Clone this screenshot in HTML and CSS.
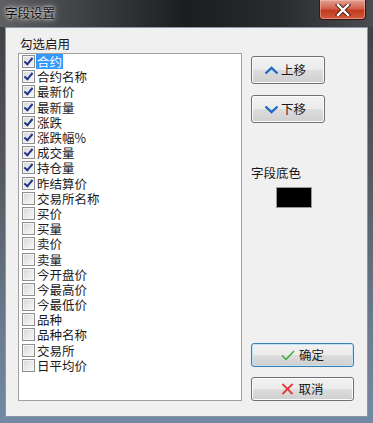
FILE: index.html
```html
<!DOCTYPE html>
<html lang="zh-CN">
<head>
  <meta charset="UTF-8">
  <title>字段设置</title>
  <link rel="stylesheet" href="styles.css">
</head>
<body>
  <div class="window">
    <div class="titlebar">
      <span class="title">字段设置</span>
      <div class="close">
        <svg width="16" height="12" viewBox="0 0 16 12">
          <path d="M3 1 L13 11 M13 1 L3 11" stroke="#4a1a14" stroke-width="4.2" stroke-linecap="square"/>
          <path d="M3 1 L13 11 M13 1 L3 11" stroke="#fff" stroke-width="2.4" stroke-linecap="square"/>
        </svg>
      </div>
    </div>
    <div class="client">
      <div class="left">
        <p class="label">勾选启用</p>
        <ul class="fields">
          <li class="on selected"><span class="box"></span><span class="name">合约</span></li>
          <li class="on"><span class="box"></span><span class="name">合约名称</span></li>
          <li class="on"><span class="box"></span><span class="name">最新价</span></li>
          <li class="on"><span class="box"></span><span class="name">最新量</span></li>
          <li class="on"><span class="box"></span><span class="name">涨跌</span></li>
          <li class="on"><span class="box"></span><span class="name">涨跌幅%</span></li>
          <li class="on"><span class="box"></span><span class="name">成交量</span></li>
          <li class="on"><span class="box"></span><span class="name">持仓量</span></li>
          <li class="on"><span class="box"></span><span class="name">昨结算价</span></li>
          <li><span class="box"></span><span class="name">交易所名称</span></li>
          <li><span class="box"></span><span class="name">买价</span></li>
          <li><span class="box"></span><span class="name">买量</span></li>
          <li><span class="box"></span><span class="name">卖价</span></li>
          <li><span class="box"></span><span class="name">卖量</span></li>
          <li><span class="box"></span><span class="name">今开盘价</span></li>
          <li><span class="box"></span><span class="name">今最高价</span></li>
          <li><span class="box"></span><span class="name">今最低价</span></li>
          <li><span class="box"></span><span class="name">品种</span></li>
          <li><span class="box"></span><span class="name">品种名称</span></li>
          <li><span class="box"></span><span class="name">交易所</span></li>
          <li><span class="box"></span><span class="name">日平均价</span></li>
        </ul>
      </div>
      <div class="right">
        <button class="btn move">
          <svg width="15" height="9" viewBox="0 0 15 9"><path d="M1.5 7.5 L7.5 1.8 L13.5 7.5" fill="none" stroke="#1b6ac4" stroke-width="2.4"/></svg>上移
        </button>
        <button class="btn move down">
          <svg width="15" height="9" viewBox="0 0 15 9"><path d="M1.5 1.5 L7.5 7.2 L13.5 1.5" fill="none" stroke="#1b6ac4" stroke-width="2.4"/></svg>下移
        </button>
        <p class="label color-label">字段底色</p>
        <div class="swatch"></div>
        <button class="btn wide default">
          <svg width="14" height="11" viewBox="0 0 14 11"><path d="M1 5.5 L5 9.5 L13 1" fill="none" stroke="#3aa83a" stroke-width="1.4"/></svg>确定
        </button>
        <button class="btn wide">
          <svg width="13" height="12" viewBox="0 0 13 12"><path d="M1.5 1 L11.5 11 M11.5 1 L1.5 11" fill="none" stroke="#e23a3a" stroke-width="1.8"/></svg>取消
        </button>
      </div>
    </div>
  </div>
</body>
</html>
```

FILE: styles.css
```css
body {
  margin: 0;
  font-family: "Noto Sans CJK SC", "Noto Sans", sans-serif;
  font-size: 12.5px;
  line-height: 16px;
  color: #1a1a1a;
}

.window {
  width: 373px;
  height: 423px;
  display: flex;
  flex-direction: column;
  background: linear-gradient(to bottom, #3a3c3f 0%, #55595f 40%, #6c7d92 80%, #7389a3 100%);
}

.titlebar {
  height: 27px;
  flex: none;
  display: flex;
  align-items: flex-start;
  background: linear-gradient(to right, #5d5f62 0%, #3f4144 22%, #1c1d1f 50%, #2a2b2d 75%, #4a4c4f 100%);
}

.title {
  margin: 5px 0 0 5px;
  color: #111;
  font-size: 12.5px;
  line-height: 16px;
  text-shadow: 0 0 6px rgba(255, 255, 255, 0.9), 0 0 3px rgba(255, 255, 255, 0.9);
}

.close {
  margin-left: auto;
  margin-right: 7px;
  width: 45px;
  height: 19px;
  display: flex;
  align-items: center;
  justify-content: center;
  border: 1px solid #3b1713;
  border-top: none;
  border-radius: 0 0 4px 4px;
  background: linear-gradient(to bottom, #e0a094 0%, #d1614c 45%, #c23a1f 55%, #cf5c3e 100%);
  box-shadow: inset 0 0 0 1px rgba(255, 200, 190, 0.45);
}

.client {
  flex: 1;
  margin: 0 5px 6px 5px;
  background: #f0f0f0;
  border: 1px solid #8a98a8;
  display: flex;
  padding: 8px 0 0 12px;
}

.label {
  margin: 0;
  line-height: 16px;
}

.left .label {
  margin-left: 2px;
}

.fields {
  list-style: none;
  margin: 1px 0 0 0;
  padding: 0 3px;
  width: 216px;
  height: 346px;
  background: #fff;
  border: 1px solid #a0a0a0;
}

.fields li {
  height: 15.2px;
  display: flex;
  align-items: center;
}

.box {
  flex: none;
  width: 11px;
  height: 11px;
  border: 1px solid #8e8f8f;
  background: linear-gradient(135deg, #d6d6d6 0%, #ececec 60%, #f7f7f7 100%);
  box-shadow: inset 0 0 0 1px #f4f4f4;
  margin-right: 1px;
  position: relative;
}

.on .box::after {
  content: "";
  position: absolute;
  left: 3px;
  top: 0px;
  width: 3px;
  height: 7px;
  border: solid #22358a;
  border-width: 0 2px 2px 0;
  transform: rotate(40deg);
}

.name {
  display: block;
  height: 15px;
  padding: 0 1px;
  line-height: 15px;
}

.selected .name {
  background: #3399ff;
  color: #fff;
}

.right {
  margin-left: 9px;
  padding-top: 20px;
  padding-bottom: 15px;
  display: flex;
  flex-direction: column;
  align-items: flex-start;
}

.btn {
  font-family: inherit;
  font-size: 12.5px;
  line-height: 16px;
  color: #1a1a1a;
  border: 1px solid #707070;
  border-radius: 3px;
  background: linear-gradient(to bottom, #f2f2f2 0%, #ebebeb 50%, #dddddd 51%, #cfcfcf 100%);
  box-shadow: inset 0 0 0 1px #fcfcfc;
  display: flex;
  align-items: center;
  justify-content: center;
  gap: 2px;
  padding: 0;
}

.move {
  width: 74px;
  height: 28px;
  padding-right: 6px;
}

.move.down {
  margin-top: 11px;
}

.color-label {
  margin-top: 42px;
}

.swatch {
  margin: 6px 0 0 25px;
  width: 34px;
  height: 19px;
  background: #000;
  border: 1px solid #9a9a9a;
}

.wide {
  width: 103px;
  height: 24px;
  gap: 4px;
}

.default {
  margin-top: auto;
  border-color: #3c7fb1;
  box-shadow: inset 0 0 0 1px #bfe3f6;
}

.default + .wide {
  margin-top: 10px;
}
```
